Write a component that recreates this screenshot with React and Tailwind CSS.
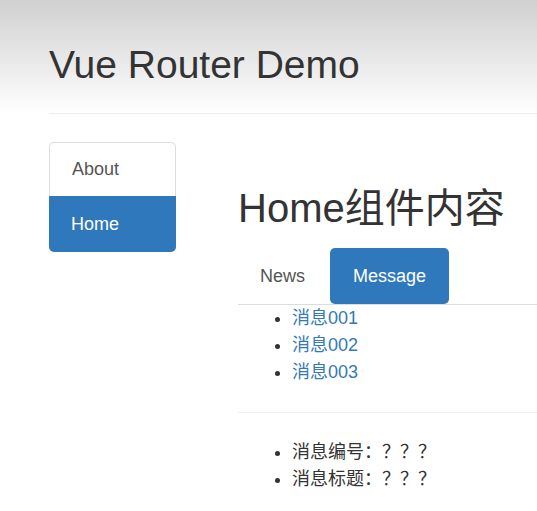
import React from 'react';

const font = { fontFamily: '"Liberation Sans", "Noto Sans CJK SC", sans-serif' };

const messages = ['消息001', '消息002', '消息003'];

const App = () => {
  return (
    <div className="min-h-[511px] bg-white text-[#333] text-[18px]" style={font}>
      {/* Page header */}
      <div className="bg-gradient-to-b from-[#d0d0d0] to-white pl-[49px] pt-[44px]">
        <div className="border-b border-[#eee] pb-[27px]">
          <h1 className="text-[39px] leading-[42px] font-normal">Vue Router Demo</h1>
        </div>
      </div>

      <div className="flex mt-[28px] pl-[49px]">
        {/* Side nav */}
        <div className="w-[127px] shrink-0">
          <a className="flex items-center h-[54px] px-[22px] border border-b-0 border-[#ddd] rounded-t-[5px] text-[#555]">
            About
          </a>
          <a className="flex items-center h-[56px] px-[22px] bg-[#2f78bb] rounded-b-[5px] text-white">
            Home
          </a>
        </div>

        {/* Main content */}
        <div className="ml-[62px] flex-1">
          <h2 className="mt-[45px] text-[40px] leading-[43px] font-normal">Home组件内容</h2>

          <ul className="flex mt-[18px] border-b border-[#ddd]">
            <li>
              <a className="block px-[22px] py-[14px] leading-[28px] text-[#555]">News</a>
            </li>
            <li className="ml-[3px] -mb-px">
              <a className="block px-[23px] py-[14px] leading-[28px] bg-[#2f78bb] text-white rounded-[5px]">
                Message
              </a>
            </li>
          </ul>

          <ul className="list-disc pl-[54px]">
            {messages.map((m) => (
              <li key={m} className="h-[27px] leading-[27px]">
                <a className="text-[#337ab7]">{m}</a>
              </li>
            ))}
          </ul>

          <hr className="mt-[26px] mb-[26px] border-[#eee]" />

          <ul className="list-disc pl-[54px]">
            <li className="h-[27px] leading-[27px]">消息编号：？？？</li>
            <li className="h-[27px] leading-[27px]">消息标题：？？？</li>
          </ul>
        </div>
      </div>
    </div>
  );
};

export default App;
